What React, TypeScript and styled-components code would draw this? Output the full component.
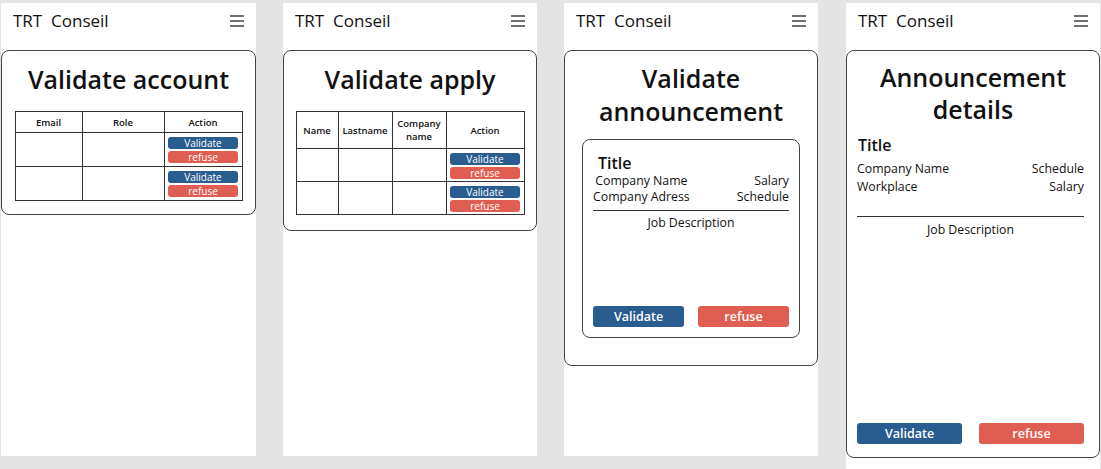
import React from "react";
import styled, { createGlobalStyle } from "styled-components";

const Global = createGlobalStyle`
  html, body { margin: 0; padding: 0; }
  body {
    background: #e4e4e4;
    font-family: "Open Sans", "Noto Sans", sans-serif;
    color: #111;
  }
`;

const Page = styled.div`
  display: flex;
  align-items: flex-start;
  gap: 27px;
  padding: 3px 0 0 1px;
  height: 466px;
  overflow: hidden;
  background: #e4e4e4;
`;

const Phone = styled.div<{ $w: number; $h: number; $ml?: number }>`
  width: ${(p) => p.$w}px;
  height: ${(p) => p.$h}px;
  margin-left: ${(p) => p.$ml ?? 0}px;
  background: #fff;
  display: flex;
  flex-direction: column;
  flex-shrink: 0;
`;

const Header = styled.div`
  height: 47px;
  display: flex;
  align-items: center;
  justify-content: space-between;
  padding: 0 12px 12px 12px;
  box-sizing: border-box;
`;

const Brand = styled.span`
  font-size: 17px;
  white-space: pre;
  color: #111;
`;

const Card = styled.div<{ $h?: number; $pt?: number; $pb?: number }>`
  border: 1px solid #444;
  border-radius: 8px;
  display: flex;
  flex-direction: column;
  align-items: center;
  box-sizing: border-box;
  padding: ${(p) => p.$pt ?? 12}px 0 ${(p) => p.$pb ?? 13}px;
  ${(p) => (p.$h ? `height: ${p.$h}px;` : "")}
`;

const PageTitle = styled.h1<{ $lh?: number }>`
  margin: 0;
  font-size: 25px;
  line-height: ${(p) => p.$lh ?? 33}px;
  font-weight: 600;
  text-align: center;
  color: #111;
`;

const Table = styled.table<{ $mt: number }>`
  border-collapse: collapse;
  margin-top: ${(p) => p.$mt}px;
  table-layout: fixed;
  width: 224px;
`;

const Th = styled.th<{ $w: number; $h: number }>`
  width: ${(p) => p.$w}px;
  height: ${(p) => p.$h}px;
  border: 1px solid #333;
  font-size: 9.5px;
  line-height: 13px;
  font-weight: 600;
  padding: 0;
  text-align: center;
  vertical-align: middle;
  color: #111;
`;

const Td = styled.td<{ $h: number }>`
  border: 1px solid #333;
  height: ${(p) => p.$h}px;
  padding: 0;
  vertical-align: top;
`;

const ActionStack = styled.div`
  display: flex;
  flex-direction: column;
  align-items: center;
  gap: 2px;
  padding-top: 4px;
`;

const MiniBtn = styled.div<{ $red?: boolean }>`
  width: 70px;
  height: 12px;
  border-radius: 3px;
  background: ${(p) => (p.$red ? "#e05d51" : "#2a5d8f")};
  color: #fff;
  font-size: 10px;
  line-height: 12px;
  text-align: center;
`;

const Inner = styled.div`
  width: 218px;
  height: 199px;
  margin-top: 11px;
  border: 1px solid #444;
  border-radius: 8px;
  box-sizing: border-box;
  padding: 13px 10px 10px;
  display: flex;
  flex-direction: column;
`;

const ItemTitle = styled.div<{ $pl: number }>`
  font-size: 16px;
  line-height: 20px;
  font-weight: 600;
  padding-left: ${(p) => p.$pl}px;
  color: #111;
`;

const InfoRow = styled.div<{ $lh: number; $mt?: number }>`
  display: flex;
  justify-content: space-between;
  font-size: 12.3px;
  line-height: ${(p) => p.$lh}px;
  margin-top: ${(p) => p.$mt ?? 0}px;
  color: #111;
`;

const InfoCol = styled.div<{ $align: "left" | "right" | "center" }>`
  display: flex;
  flex-direction: column;
  text-align: ${(p) => p.$align};
`;

const Divider = styled.div<{ $mt: number }>`
  height: 1px;
  background: #333;
  margin-top: ${(p) => p.$mt}px;
`;

const JobDesc = styled.div<{ $mt: number }>`
  text-align: center;
  font-size: 12.3px;
  line-height: 16px;
  margin-top: ${(p) => p.$mt}px;
  color: #111;
`;

const BtnRow = styled.div<{ $gap: number }>`
  display: flex;
  gap: ${(p) => p.$gap}px;
  margin-top: auto;
`;

const BigBtn = styled.div<{ $red?: boolean; $w: number }>`
  width: ${(p) => p.$w}px;
  height: 21px;
  border-radius: 3px;
  background: ${(p) => (p.$red ? "#e05d51" : "#2a5d8f")};
  color: #fff;
  font-size: 12.5px;
  font-weight: 600;
  line-height: 21px;
  text-align: center;
`;

const DetailBody = styled.div`
  align-self: stretch;
  flex: 1;
  display: flex;
  flex-direction: column;
  padding: 10px 15px 0 10px;
`;

const Burger = () => (
  <svg width="14" height="12" viewBox="0 0 14 12">
    <g stroke="#333" strokeWidth="1.4">
      <line x1="0" y1="1" x2="14" y2="1" />
      <line x1="0" y1="6" x2="14" y2="6" />
      <line x1="0" y1="11" x2="14" y2="11" />
    </g>
  </svg>
);

const Top = () => (
  <Header>
    <Brand>{"TRT  Conseil"}</Brand>
    <Burger />
  </Header>
);

const Actions = () => (
  <ActionStack>
    <MiniBtn>Validate</MiniBtn>
    <MiniBtn $red>refuse</MiniBtn>
  </ActionStack>
);

export default function App() {
  return (
    <>
      <Global />
      <Page>
        <Phone $w={255} $h={453}>
          <Top />
          <Card $pb={13}>
            <PageTitle>Validate account</PageTitle>
            <Table $mt={15}>
              <thead>
                <tr>
                  <Th $w={66} $h={20}>Email</Th>
                  <Th $w={81} $h={20}>Role</Th>
                  <Th $w={77} $h={20}>Action</Th>
                </tr>
              </thead>
              <tbody>
                {[0, 1].map((i) => (
                  <tr key={i}>
                    <Td $h={33} />
                    <Td $h={33} />
                    <Td $h={33}>
                      <Actions />
                    </Td>
                  </tr>
                ))}
              </tbody>
            </Table>
          </Card>
        </Phone>

        <Phone $w={254} $h={453}>
          <Top />
          <Card $pb={15}>
            <PageTitle>Validate apply</PageTitle>
            <Table $mt={15}>
              <thead>
                <tr>
                  <Th $w={41} $h={36}>Name</Th>
                  <Th $w={53} $h={36}>Lastname</Th>
                  <Th $w={53} $h={36}>
                    Company
                    <br />
                    name
                  </Th>
                  <Th $w={77} $h={36}>Action</Th>
                </tr>
              </thead>
              <tbody>
                {[0, 1].map((i) => (
                  <tr key={i}>
                    <Td $h={32} />
                    <Td $h={32} />
                    <Td $h={32} />
                    <Td $h={32}>
                      <Actions />
                    </Td>
                  </tr>
                ))}
              </tbody>
            </Table>
          </Card>
        </Phone>

        <Phone $w={254} $h={453}>
          <Top />
          <Card $h={316} $pt={11}>
            <PageTitle>
              Validate
              <br />
              announcement
            </PageTitle>
            <Inner>
              <ItemTitle $pl={5}>Title</ItemTitle>
              <InfoRow $lh={16}>
                <InfoCol $align="center">
                  <span>Company Name</span>
                  <span>Company Adress</span>
                </InfoCol>
                <InfoCol $align="right">
                  <span>Salary</span>
                  <span>Schedule</span>
                </InfoCol>
              </InfoRow>
              <Divider $mt={5} />
              <JobDesc $mt={4}>Job Description</JobDesc>
              <BtnRow $gap={14}>
                <BigBtn $w={91}>Validate</BigBtn>
                <BigBtn $w={91} $red>
                  refuse
                </BigBtn>
              </BtnRow>
            </Inner>
          </Card>
        </Phone>

        <Phone $w={254} $h={470} $ml={1}>
          <Top />
          <Card $h={408} $pt={10} $pb={13}>
            <PageTitle $lh={32}>
              Announcement
              <br />
              details
            </PageTitle>
            <DetailBody>
              <ItemTitle $pl={1}>Title</ItemTitle>
              <InfoRow $lh={18} $mt={5}>
                <InfoCol $align="left">
                  <span>Company Name</span>
                  <span>Workplace</span>
                </InfoCol>
                <InfoCol $align="right">
                  <span>Schedule</span>
                  <span>Salary</span>
                </InfoCol>
              </InfoRow>
              <Divider $mt={20} />
              <JobDesc $mt={5}>Job Description</JobDesc>
              <BtnRow $gap={17}>
                <BigBtn $w={105}>Validate</BigBtn>
                <BigBtn $w={105} $red>
                  refuse
                </BigBtn>
              </BtnRow>
            </DetailBody>
          </Card>
        </Phone>
      </Page>
    </>
  );
}
